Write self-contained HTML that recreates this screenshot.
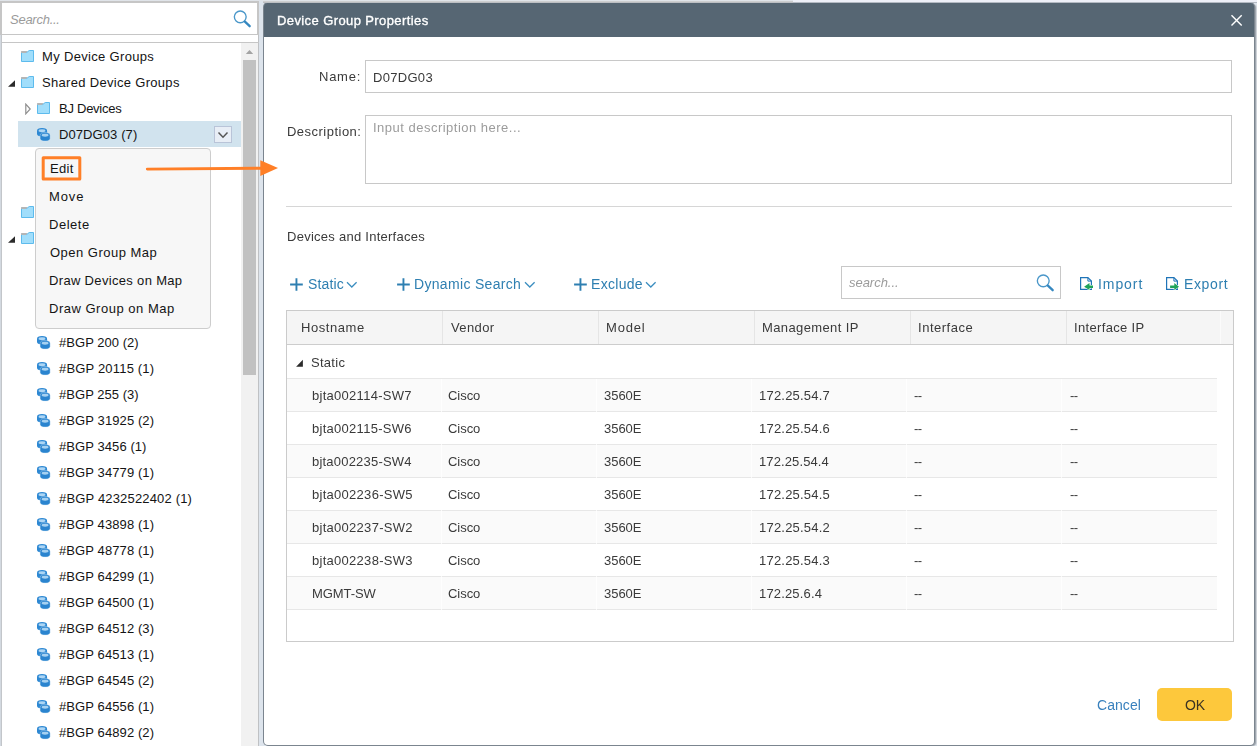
<!DOCTYPE html>
<html lang="en">
<head>
<meta charset="utf-8">
<title>Device Group Properties</title>
<style>
*{box-sizing:border-box;margin:0;padding:0}
html,body{width:1257px;height:746px;overflow:hidden}
body{background:#dde4ec;font-family:"Liberation Sans",sans-serif;font-size:13px;color:#333;position:relative}
.abs,svg{position:absolute}
.t{position:absolute;white-space:nowrap;line-height:16px;height:16px}
.i{font-style:italic;color:#9b9b9b}
.tr{color:#141414}
.n{color:#3a3a3a}
.g{color:#9c9c9c}
.w{color:#fff;-webkit-text-stroke:.35px #fff}
.b{color:#2e7fb1;font-size:14px}
.k{color:#3b3323;font-size:14px}
.cn{color:#3880bd}
#topstrip{left:0;top:0;width:1257px;height:1px;background:#e0e4e9}
#topstrip3{left:263px;top:1px;width:994px;height:2px;background:linear-gradient(#cdcecf 0,#cdcecf 1px,#bcbfc3 1px,#bcbfc3 2px)}
#topstrip2{left:793px;top:0;width:464px;height:3px;background:linear-gradient(#eef0f8 0,#eef0f8 2px,#b4bac3 2px,#b4bac3 3px)}
#left{left:0;top:0;width:259px;height:746px;background:linear-gradient(90deg,#d3d9e0 0,#d3d9e0 1px,#c3c6ca 1px,#c3c6ca 2px,#fff 2px);border-right:1px solid #bfc1c4}
#sbox{left:0;top:1px;width:259px;height:34px;border:solid #c6c6c6;border-width:2px 2px 1px 2px;background:#fff}
#treeline{left:2px;top:42px;width:257px;height:1px;background:#c6c6c6}
#strack{left:241px;top:43px;width:17px;height:703px;background:#f1f1f1}
#sthumb{left:243px;top:60px;width:13px;height:315px;background:#c1c1c1}
#sel{left:18px;top:121px;width:223px;height:26px;background:#d1e3ee}
#menu{left:35px;top:148px;width:176px;height:181px;background:#f7f7f7;border:1px solid #cdcdcd;border-radius:4px}
#dlg{left:264px;top:3px;width:990px;height:742px;background:#fff;border-radius:4px;box-shadow:0 0 0 1px #7b858f,2px 1px 0 0 #a0a7af,3px 1px 0 0 #cdd2d8}
#title{left:264px;top:3px;width:990px;height:34px;background:#566673;border-radius:3px 3px 0 0}
.inp{position:absolute;border:1px solid #c8c8c8;background:#fff}
.hl{position:absolute;height:1px;background:#d6d6d6}
#tbl{left:286px;top:310px;width:948px;height:332px;border:1px solid #cbcbcb;background:#fff}
#thead{left:287px;top:311px;width:946px;height:34px;background:#f5f5f5;border-bottom:1px solid #cdcdcd}
.cs{position:absolute;top:311px;width:1px;height:33px;background:#e5e5e5}
.dr{position:absolute;left:287px;width:930px;height:33px;border-bottom:1px solid #e7e7e7}
.od{background:#fafafa}
#dtext{position:absolute;left:0;top:0;width:1257px;height:746px;will-change:transform}
#ok{left:1157px;top:688px;width:75px;height:33px;background:#fdc83c;border-radius:5px}
</style>
</head>
<body>
<div class="abs" id="left"></div>
<div class="abs" id="sbox"></div>
<svg style="left:232px;top:8px" width="22" height="22" viewBox="0 0 22 22"><circle cx="8.25" cy="8.85" r="5.9" fill="none" stroke="#4a97c9" stroke-width="1.35"/><path d="M12.9 13.6 L17.7 18.2" stroke="#3587c0" stroke-width="2.3" stroke-linecap="round"/></svg>
<div class="abs" id="treeline"></div><div class="abs" id="strack"></div>
<svg style="left:245px;top:49px" width="9" height="6"><path d="M0.8 5 L4.5 1 L8.2 5Z" fill="#a3a3a3"/></svg>
<div class="abs" id="sthumb"></div><div class="abs" id="sel"></div>
<svg style="left:21px;top:50px" width="13" height="12" viewBox="0 0 13 12"><path d="M0.5 2.5 H5.7 L8.2 0.5 H12.5 V11.5 H0.5Z" fill="#a1defb" stroke="#5dbbed" stroke-width="1"/><path d="M0.1 1.1 H6.6 L4.9 2.9 H0.1Z" fill="#b5b5b5"/></svg>
<svg style="left:21px;top:76px" width="13" height="12" viewBox="0 0 13 12"><path d="M0.5 2.5 H5.7 L8.2 0.5 H12.5 V11.5 H0.5Z" fill="#a1defb" stroke="#5dbbed" stroke-width="1"/><path d="M0.1 1.1 H6.6 L4.9 2.9 H0.1Z" fill="#b5b5b5"/></svg>
<svg style="left:8px;top:80px" width="8" height="8"><path d="M0 6.8 H7 V0.2Z" fill="#2b2b2b"/></svg>
<svg style="left:37px;top:102px" width="13" height="12" viewBox="0 0 13 12"><path d="M0.5 2.5 H5.7 L8.2 0.5 H12.5 V11.5 H0.5Z" fill="#a1defb" stroke="#5dbbed" stroke-width="1"/><path d="M0.1 1.1 H6.6 L4.9 2.9 H0.1Z" fill="#b5b5b5"/></svg>
<svg style="left:25px;top:103px" width="7" height="12"><path d="M0.8 1.2 L5.2 6 L0.8 10.8Z" fill="#fff" stroke="#8f8f8f" stroke-width="1.2"/></svg>
<svg style="left:37px;top:127px" width="14" height="15" viewBox="0 0 14 15"><path d="M0 3.9 A5.05 2.8 0 0 1 10.1 3.9 V6.7 A5.05 2.8 0 0 1 0 6.7Z" fill="#2d88d3"/><ellipse cx="5" cy="3.7" rx="3.4" ry="1.45" fill="#aed6f4"/><path d="M3.1 8.4 A5 2.8 0 0 1 13.1 8.4 V11.2 A5 2.8 0 0 1 3.1 11.2Z" fill="#2a84cf" stroke="#d6eaf7" stroke-opacity=".65" stroke-width=".6"/><ellipse cx="8.1" cy="8.2" rx="3.4" ry="1.45" fill="#a6d1f1"/></svg>
<svg style="left:21px;top:206px" width="13" height="12" viewBox="0 0 13 12"><path d="M0.5 2.5 H5.7 L8.2 0.5 H12.5 V11.5 H0.5Z" fill="#a1defb" stroke="#5dbbed" stroke-width="1"/><path d="M0.1 1.1 H6.6 L4.9 2.9 H0.1Z" fill="#b5b5b5"/></svg>
<svg style="left:21px;top:232px" width="13" height="12" viewBox="0 0 13 12"><path d="M0.5 2.5 H5.7 L8.2 0.5 H12.5 V11.5 H0.5Z" fill="#a1defb" stroke="#5dbbed" stroke-width="1"/><path d="M0.1 1.1 H6.6 L4.9 2.9 H0.1Z" fill="#b5b5b5"/></svg>
<svg style="left:8px;top:236px" width="8" height="8"><path d="M0 6.8 H7 V0.2Z" fill="#2b2b2b"/></svg>
<svg style="left:37px;top:335px" width="14" height="15" viewBox="0 0 14 15"><path d="M0 3.9 A5.05 2.8 0 0 1 10.1 3.9 V6.7 A5.05 2.8 0 0 1 0 6.7Z" fill="#2d88d3"/><ellipse cx="5" cy="3.7" rx="3.4" ry="1.45" fill="#aed6f4"/><path d="M3.1 8.4 A5 2.8 0 0 1 13.1 8.4 V11.2 A5 2.8 0 0 1 3.1 11.2Z" fill="#2a84cf" stroke="#d6eaf7" stroke-opacity=".65" stroke-width=".6"/><ellipse cx="8.1" cy="8.2" rx="3.4" ry="1.45" fill="#a6d1f1"/></svg>
<svg style="left:37px;top:361px" width="14" height="15" viewBox="0 0 14 15"><path d="M0 3.9 A5.05 2.8 0 0 1 10.1 3.9 V6.7 A5.05 2.8 0 0 1 0 6.7Z" fill="#2d88d3"/><ellipse cx="5" cy="3.7" rx="3.4" ry="1.45" fill="#aed6f4"/><path d="M3.1 8.4 A5 2.8 0 0 1 13.1 8.4 V11.2 A5 2.8 0 0 1 3.1 11.2Z" fill="#2a84cf" stroke="#d6eaf7" stroke-opacity=".65" stroke-width=".6"/><ellipse cx="8.1" cy="8.2" rx="3.4" ry="1.45" fill="#a6d1f1"/></svg>
<svg style="left:37px;top:387px" width="14" height="15" viewBox="0 0 14 15"><path d="M0 3.9 A5.05 2.8 0 0 1 10.1 3.9 V6.7 A5.05 2.8 0 0 1 0 6.7Z" fill="#2d88d3"/><ellipse cx="5" cy="3.7" rx="3.4" ry="1.45" fill="#aed6f4"/><path d="M3.1 8.4 A5 2.8 0 0 1 13.1 8.4 V11.2 A5 2.8 0 0 1 3.1 11.2Z" fill="#2a84cf" stroke="#d6eaf7" stroke-opacity=".65" stroke-width=".6"/><ellipse cx="8.1" cy="8.2" rx="3.4" ry="1.45" fill="#a6d1f1"/></svg>
<svg style="left:37px;top:413px" width="14" height="15" viewBox="0 0 14 15"><path d="M0 3.9 A5.05 2.8 0 0 1 10.1 3.9 V6.7 A5.05 2.8 0 0 1 0 6.7Z" fill="#2d88d3"/><ellipse cx="5" cy="3.7" rx="3.4" ry="1.45" fill="#aed6f4"/><path d="M3.1 8.4 A5 2.8 0 0 1 13.1 8.4 V11.2 A5 2.8 0 0 1 3.1 11.2Z" fill="#2a84cf" stroke="#d6eaf7" stroke-opacity=".65" stroke-width=".6"/><ellipse cx="8.1" cy="8.2" rx="3.4" ry="1.45" fill="#a6d1f1"/></svg>
<svg style="left:37px;top:439px" width="14" height="15" viewBox="0 0 14 15"><path d="M0 3.9 A5.05 2.8 0 0 1 10.1 3.9 V6.7 A5.05 2.8 0 0 1 0 6.7Z" fill="#2d88d3"/><ellipse cx="5" cy="3.7" rx="3.4" ry="1.45" fill="#aed6f4"/><path d="M3.1 8.4 A5 2.8 0 0 1 13.1 8.4 V11.2 A5 2.8 0 0 1 3.1 11.2Z" fill="#2a84cf" stroke="#d6eaf7" stroke-opacity=".65" stroke-width=".6"/><ellipse cx="8.1" cy="8.2" rx="3.4" ry="1.45" fill="#a6d1f1"/></svg>
<svg style="left:37px;top:465px" width="14" height="15" viewBox="0 0 14 15"><path d="M0 3.9 A5.05 2.8 0 0 1 10.1 3.9 V6.7 A5.05 2.8 0 0 1 0 6.7Z" fill="#2d88d3"/><ellipse cx="5" cy="3.7" rx="3.4" ry="1.45" fill="#aed6f4"/><path d="M3.1 8.4 A5 2.8 0 0 1 13.1 8.4 V11.2 A5 2.8 0 0 1 3.1 11.2Z" fill="#2a84cf" stroke="#d6eaf7" stroke-opacity=".65" stroke-width=".6"/><ellipse cx="8.1" cy="8.2" rx="3.4" ry="1.45" fill="#a6d1f1"/></svg>
<svg style="left:37px;top:491px" width="14" height="15" viewBox="0 0 14 15"><path d="M0 3.9 A5.05 2.8 0 0 1 10.1 3.9 V6.7 A5.05 2.8 0 0 1 0 6.7Z" fill="#2d88d3"/><ellipse cx="5" cy="3.7" rx="3.4" ry="1.45" fill="#aed6f4"/><path d="M3.1 8.4 A5 2.8 0 0 1 13.1 8.4 V11.2 A5 2.8 0 0 1 3.1 11.2Z" fill="#2a84cf" stroke="#d6eaf7" stroke-opacity=".65" stroke-width=".6"/><ellipse cx="8.1" cy="8.2" rx="3.4" ry="1.45" fill="#a6d1f1"/></svg>
<svg style="left:37px;top:517px" width="14" height="15" viewBox="0 0 14 15"><path d="M0 3.9 A5.05 2.8 0 0 1 10.1 3.9 V6.7 A5.05 2.8 0 0 1 0 6.7Z" fill="#2d88d3"/><ellipse cx="5" cy="3.7" rx="3.4" ry="1.45" fill="#aed6f4"/><path d="M3.1 8.4 A5 2.8 0 0 1 13.1 8.4 V11.2 A5 2.8 0 0 1 3.1 11.2Z" fill="#2a84cf" stroke="#d6eaf7" stroke-opacity=".65" stroke-width=".6"/><ellipse cx="8.1" cy="8.2" rx="3.4" ry="1.45" fill="#a6d1f1"/></svg>
<svg style="left:37px;top:543px" width="14" height="15" viewBox="0 0 14 15"><path d="M0 3.9 A5.05 2.8 0 0 1 10.1 3.9 V6.7 A5.05 2.8 0 0 1 0 6.7Z" fill="#2d88d3"/><ellipse cx="5" cy="3.7" rx="3.4" ry="1.45" fill="#aed6f4"/><path d="M3.1 8.4 A5 2.8 0 0 1 13.1 8.4 V11.2 A5 2.8 0 0 1 3.1 11.2Z" fill="#2a84cf" stroke="#d6eaf7" stroke-opacity=".65" stroke-width=".6"/><ellipse cx="8.1" cy="8.2" rx="3.4" ry="1.45" fill="#a6d1f1"/></svg>
<svg style="left:37px;top:569px" width="14" height="15" viewBox="0 0 14 15"><path d="M0 3.9 A5.05 2.8 0 0 1 10.1 3.9 V6.7 A5.05 2.8 0 0 1 0 6.7Z" fill="#2d88d3"/><ellipse cx="5" cy="3.7" rx="3.4" ry="1.45" fill="#aed6f4"/><path d="M3.1 8.4 A5 2.8 0 0 1 13.1 8.4 V11.2 A5 2.8 0 0 1 3.1 11.2Z" fill="#2a84cf" stroke="#d6eaf7" stroke-opacity=".65" stroke-width=".6"/><ellipse cx="8.1" cy="8.2" rx="3.4" ry="1.45" fill="#a6d1f1"/></svg>
<svg style="left:37px;top:595px" width="14" height="15" viewBox="0 0 14 15"><path d="M0 3.9 A5.05 2.8 0 0 1 10.1 3.9 V6.7 A5.05 2.8 0 0 1 0 6.7Z" fill="#2d88d3"/><ellipse cx="5" cy="3.7" rx="3.4" ry="1.45" fill="#aed6f4"/><path d="M3.1 8.4 A5 2.8 0 0 1 13.1 8.4 V11.2 A5 2.8 0 0 1 3.1 11.2Z" fill="#2a84cf" stroke="#d6eaf7" stroke-opacity=".65" stroke-width=".6"/><ellipse cx="8.1" cy="8.2" rx="3.4" ry="1.45" fill="#a6d1f1"/></svg>
<svg style="left:37px;top:621px" width="14" height="15" viewBox="0 0 14 15"><path d="M0 3.9 A5.05 2.8 0 0 1 10.1 3.9 V6.7 A5.05 2.8 0 0 1 0 6.7Z" fill="#2d88d3"/><ellipse cx="5" cy="3.7" rx="3.4" ry="1.45" fill="#aed6f4"/><path d="M3.1 8.4 A5 2.8 0 0 1 13.1 8.4 V11.2 A5 2.8 0 0 1 3.1 11.2Z" fill="#2a84cf" stroke="#d6eaf7" stroke-opacity=".65" stroke-width=".6"/><ellipse cx="8.1" cy="8.2" rx="3.4" ry="1.45" fill="#a6d1f1"/></svg>
<svg style="left:37px;top:647px" width="14" height="15" viewBox="0 0 14 15"><path d="M0 3.9 A5.05 2.8 0 0 1 10.1 3.9 V6.7 A5.05 2.8 0 0 1 0 6.7Z" fill="#2d88d3"/><ellipse cx="5" cy="3.7" rx="3.4" ry="1.45" fill="#aed6f4"/><path d="M3.1 8.4 A5 2.8 0 0 1 13.1 8.4 V11.2 A5 2.8 0 0 1 3.1 11.2Z" fill="#2a84cf" stroke="#d6eaf7" stroke-opacity=".65" stroke-width=".6"/><ellipse cx="8.1" cy="8.2" rx="3.4" ry="1.45" fill="#a6d1f1"/></svg>
<svg style="left:37px;top:673px" width="14" height="15" viewBox="0 0 14 15"><path d="M0 3.9 A5.05 2.8 0 0 1 10.1 3.9 V6.7 A5.05 2.8 0 0 1 0 6.7Z" fill="#2d88d3"/><ellipse cx="5" cy="3.7" rx="3.4" ry="1.45" fill="#aed6f4"/><path d="M3.1 8.4 A5 2.8 0 0 1 13.1 8.4 V11.2 A5 2.8 0 0 1 3.1 11.2Z" fill="#2a84cf" stroke="#d6eaf7" stroke-opacity=".65" stroke-width=".6"/><ellipse cx="8.1" cy="8.2" rx="3.4" ry="1.45" fill="#a6d1f1"/></svg>
<svg style="left:37px;top:699px" width="14" height="15" viewBox="0 0 14 15"><path d="M0 3.9 A5.05 2.8 0 0 1 10.1 3.9 V6.7 A5.05 2.8 0 0 1 0 6.7Z" fill="#2d88d3"/><ellipse cx="5" cy="3.7" rx="3.4" ry="1.45" fill="#aed6f4"/><path d="M3.1 8.4 A5 2.8 0 0 1 13.1 8.4 V11.2 A5 2.8 0 0 1 3.1 11.2Z" fill="#2a84cf" stroke="#d6eaf7" stroke-opacity=".65" stroke-width=".6"/><ellipse cx="8.1" cy="8.2" rx="3.4" ry="1.45" fill="#a6d1f1"/></svg>
<svg style="left:37px;top:725px" width="14" height="15" viewBox="0 0 14 15"><path d="M0 3.9 A5.05 2.8 0 0 1 10.1 3.9 V6.7 A5.05 2.8 0 0 1 0 6.7Z" fill="#2d88d3"/><ellipse cx="5" cy="3.7" rx="3.4" ry="1.45" fill="#aed6f4"/><path d="M3.1 8.4 A5 2.8 0 0 1 13.1 8.4 V11.2 A5 2.8 0 0 1 3.1 11.2Z" fill="#2a84cf" stroke="#d6eaf7" stroke-opacity=".65" stroke-width=".6"/><ellipse cx="8.1" cy="8.2" rx="3.4" ry="1.45" fill="#a6d1f1"/></svg>
<div class="abs" style="left:214px;top:126px;width:18px;height:17px;border:1px solid #b9c4d8;background:#e8eef6"></div>
<svg style="left:217px;top:131px" width="12" height="9"><path d="M1.5 1.5 L6 6.2 L10.5 1.5" fill="none" stroke="#555" stroke-width="1.5"/></svg>
<div class="abs" id="menu"></div><svg style="left:40px;top:155px" width="44" height="28"><rect x="3.2" y="2.7" width="36.6" height="21.3" fill="none" stroke="#ff7f27" stroke-width="3" stroke-linejoin="round"/></svg>
<div class="abs" id="dlg"></div><div class="abs" id="title"></div>
<div class="abs" id="topstrip"></div><div class="abs" id="topstrip3"></div><div class="abs" id="topstrip2"></div>
<svg style="left:1229px;top:13px" width="14" height="14"><path d="M2.5 2.2 L12.7 12.5 M12.7 2.2 L2.5 12.5" stroke="#fff" stroke-width="1.4"/></svg>
<div class="inp" style="left:365px;top:60px;width:867px;height:33px"></div>
<div class="inp" style="left:365px;top:115px;width:867px;height:69px"></div>
<div class="hl" style="left:286px;top:206px;width:946px"></div>
<svg style="left:144px;top:158px" width="138" height="22"><path d="M3.3 11.1 L118 10.2" stroke="#ff7f27" stroke-width="2.9" stroke-linecap="round"/><path d="M116.3 2.2 L134 10.1 L116.3 18Z" fill="#ff7f27"/></svg>
<svg style="left:290px;top:278px" width="14" height="14"><path d="M6.45 0.3 V12.8 M0.1 6.55 H12.8" stroke="#2e7fb1" stroke-width="1.9"/></svg>
<svg style="left:397px;top:278px" width="14" height="14"><path d="M6.45 0.3 V12.8 M0.1 6.55 H12.8" stroke="#2e7fb1" stroke-width="1.9"/></svg>
<svg style="left:574px;top:278px" width="14" height="14"><path d="M6.45 0.3 V12.8 M0.1 6.55 H12.8" stroke="#2e7fb1" stroke-width="1.9"/></svg>
<svg style="left:346px;top:281px" width="12" height="8"><path d="M1 1.2 L5.8 6 L10.6 1.2" fill="none" stroke="#3b8ec0" stroke-width="1.25"/></svg>
<svg style="left:524px;top:281px" width="12" height="8"><path d="M1 1.2 L5.8 6 L10.6 1.2" fill="none" stroke="#3b8ec0" stroke-width="1.25"/></svg>
<svg style="left:645px;top:281px" width="12" height="8"><path d="M1 1.2 L5.8 6 L10.6 1.2" fill="none" stroke="#3b8ec0" stroke-width="1.25"/></svg>
<div class="inp" style="left:841px;top:266px;width:220px;height:33px"></div>
<svg style="left:1035px;top:272px" width="22" height="22" viewBox="0 0 22 22"><circle cx="8.25" cy="8.85" r="5.9" fill="none" stroke="#4a97c9" stroke-width="1.35"/><path d="M12.9 13.6 L17.7 18.2" stroke="#3587c0" stroke-width="2.3" stroke-linecap="round"/></svg>
<svg style="left:1080px;top:277px" width="15" height="14"><path d="M0.6 0.6 H7.9 L11.4 4.1 V12.4 H0.6Z" fill="#fff" stroke="#1f74b8" stroke-width="1.2"/><path d="M7.9 0.8 V4.1 H11.2" fill="none" stroke="#1f74b8" stroke-width="1"/><path d="M4.1 9.7 L9.5 6.1 V8.5 H13 V10.9 H9.5 V13.1Z" fill="#1fa35a" stroke="#fff" stroke-width="1" paint-order="stroke"/></svg>
<svg style="left:1166px;top:277px" width="15" height="14"><path d="M0.6 0.6 H7.9 L11.4 4.1 V12.4 H0.6Z" fill="#fff" stroke="#1f74b8" stroke-width="1.2"/><path d="M7.9 0.8 V4.1 H11.2" fill="none" stroke="#1f74b8" stroke-width="1"/><path d="M13 9.7 L8.3 6.1 V8.5 H4.1 V10.9 H8.3 V13.1Z" fill="#1fa35a" stroke="#fff" stroke-width="1" paint-order="stroke"/></svg>
<div class="abs" id="tbl"></div><div class="abs" id="thead"></div>
<div class="cs" style="left:442px"></div>
<div class="cs" style="left:598px"></div>
<div class="cs" style="left:754px"></div>
<div class="cs" style="left:910px"></div>
<div class="cs" style="left:1066px"></div>
<div class="cs" style="left:1220px;background:#fbfbfb"></div>
<svg style="left:296px;top:359px" width="8" height="8"><path d="M0.1 7.7 H6.9 V0.7Z" fill="#2b2b2b"/></svg>
<div class="hl" style="left:287px;top:378px;width:930px;background:#e7e7e7"></div>
<div class="dr od" style="top:379px"></div>
<div class="dr" style="top:412px"></div>
<div class="dr od" style="top:445px"></div>
<div class="dr" style="top:478px"></div>
<div class="dr od" style="top:511px"></div>
<div class="dr" style="top:544px"></div>
<div class="dr od" style="top:577px"></div>
<div class="abs" style="left:441px;top:379px;width:1px;height:231px;background:rgba(255,255,255,.75)"></div>
<div class="abs" style="left:596px;top:379px;width:1px;height:231px;background:rgba(255,255,255,.75)"></div>
<div class="abs" style="left:751px;top:379px;width:1px;height:231px;background:rgba(255,255,255,.75)"></div>
<div class="abs" style="left:906px;top:379px;width:1px;height:231px;background:rgba(255,255,255,.75)"></div>
<div class="abs" style="left:1061px;top:379px;width:1px;height:231px;background:rgba(255,255,255,.75)"></div>
<div class="abs" id="ok"></div>
<div class="t i" style="left:10px;top:12px;letter-spacing:-0.26px">Search...</div>
<div class="t tr" style="left:42px;top:49px;letter-spacing:0.33px">My Device Groups</div>
<div class="t tr" style="left:42px;top:75px;letter-spacing:0.31px">Shared Device Groups</div>
<div class="t tr" style="left:59px;top:101px;letter-spacing:-0.26px">BJ Devices</div>
<div class="t tr" style="left:59px;top:127px;letter-spacing:0.09px">D07DG03 (7)</div>
<div class="t tr" style="left:59px;top:335px;letter-spacing:0.04px">#BGP 200 (2)</div>
<div class="t tr" style="left:59px;top:361px;letter-spacing:0.18px">#BGP 20115 (1)</div>
<div class="t tr" style="left:59px;top:387px;letter-spacing:0.04px">#BGP 255 (3)</div>
<div class="t tr" style="left:59px;top:413px;letter-spacing:0.1px">#BGP 31925 (2)</div>
<div class="t tr" style="left:59px;top:439px;letter-spacing:0.08px">#BGP 3456 (1)</div>
<div class="t tr" style="left:59px;top:465px;letter-spacing:0.1px">#BGP 34779 (1)</div>
<div class="t tr" style="left:59px;top:491px;letter-spacing:0.17px">#BGP 4232522402 (1)</div>
<div class="t tr" style="left:59px;top:517px;letter-spacing:0.1px">#BGP 43898 (1)</div>
<div class="t tr" style="left:59px;top:543px;letter-spacing:0.1px">#BGP 48778 (1)</div>
<div class="t tr" style="left:59px;top:569px;letter-spacing:0.1px">#BGP 64299 (1)</div>
<div class="t tr" style="left:59px;top:595px;letter-spacing:0.1px">#BGP 64500 (1)</div>
<div class="t tr" style="left:59px;top:621px;letter-spacing:0.1px">#BGP 64512 (3)</div>
<div class="t tr" style="left:59px;top:647px;letter-spacing:0.1px">#BGP 64513 (1)</div>
<div class="t tr" style="left:59px;top:673px;letter-spacing:0.1px">#BGP 64545 (2)</div>
<div class="t tr" style="left:59px;top:699px;letter-spacing:0.1px">#BGP 64556 (1)</div>
<div class="t tr" style="left:59px;top:725px;letter-spacing:0.1px">#BGP 64892 (2)</div>
<div class="t tr" style="left:50px;top:161px;letter-spacing:0.3px">Edit</div>
<div class="t tr" style="left:49px;top:189px;letter-spacing:0.9px">Move</div>
<div class="t tr" style="left:49px;top:217px;letter-spacing:0.52px">Delete</div>
<div class="t tr" style="left:50px;top:245px;letter-spacing:0.49px">Open Group Map</div>
<div class="t tr" style="left:49px;top:273px;letter-spacing:0.33px">Draw Devices on Map</div>
<div class="t tr" style="left:49px;top:301px;letter-spacing:0.51px">Draw Group on Map</div>
<div id="dtext">
<div class="t w" style="left:277px;top:13px;letter-spacing:0.4px">Device Group Properties</div>
<div class="t n" style="left:319px;top:69px;letter-spacing:0.75px">Name:</div>
<div class="t n" style="left:373px;top:70px;letter-spacing:0.3px">D07DG03</div>
<div class="t n" style="left:287px;top:124px;letter-spacing:0.48px">Description:</div>
<div class="t g" style="left:373px;top:120px;letter-spacing:0.49px">Input description here...</div>
<div class="t n" style="left:287px;top:229px;letter-spacing:0.26px">Devices and Interfaces</div>
<div class="t b" style="left:308px;top:276px;letter-spacing:0.16px">Static</div>
<div class="t b" style="left:414px;top:276px;letter-spacing:0.32px">Dynamic Search</div>
<div class="t b" style="left:591px;top:276px;letter-spacing:0.3px">Exclude</div>
<div class="t b" style="left:1098px;top:276px;letter-spacing:0.92px">Import</div>
<div class="t b" style="left:1184px;top:276px;letter-spacing:0.64px">Export</div>
<div class="t n" style="left:301px;top:320px;letter-spacing:0.57px">Hostname</div>
<div class="t n" style="left:451px;top:320px;letter-spacing:0.38px">Vendor</div>
<div class="t n" style="left:606px;top:320px;letter-spacing:0.83px">Model</div>
<div class="t n" style="left:762px;top:320px;letter-spacing:0.38px">Management IP</div>
<div class="t n" style="left:918px;top:320px;letter-spacing:0.52px">Interface</div>
<div class="t n" style="left:1074px;top:320px;letter-spacing:0.34px">Interface IP</div>
<div class="t n" style="left:311px;top:355px;letter-spacing:0.28px">Static</div>
<div class="t n" style="left:312px;top:388px;letter-spacing:0.28px">bjta002114-SW7</div>
<div class="t n" style="left:448px;top:388px;letter-spacing:-0.05px">Cisco</div>
<div class="t n" style="left:604px;top:388px;letter-spacing:-0.03px">3560E</div>
<div class="t n" style="left:759px;top:388px;letter-spacing:0.21px">172.25.54.7</div>
<div class="t n" style="left:914px;top:388px;letter-spacing:-0.5px">--</div>
<div class="t n" style="left:1070px;top:388px;letter-spacing:-0.5px">--</div>
<div class="t n" style="left:312px;top:421px;letter-spacing:0.28px">bjta002115-SW6</div>
<div class="t n" style="left:448px;top:421px;letter-spacing:-0.05px">Cisco</div>
<div class="t n" style="left:604px;top:421px;letter-spacing:-0.03px">3560E</div>
<div class="t n" style="left:759px;top:421px;letter-spacing:0.21px">172.25.54.6</div>
<div class="t n" style="left:914px;top:421px;letter-spacing:-0.5px">--</div>
<div class="t n" style="left:1070px;top:421px;letter-spacing:-0.5px">--</div>
<div class="t n" style="left:312px;top:454px;letter-spacing:0.21px">bjta002235-SW4</div>
<div class="t n" style="left:448px;top:454px;letter-spacing:-0.05px">Cisco</div>
<div class="t n" style="left:604px;top:454px;letter-spacing:-0.03px">3560E</div>
<div class="t n" style="left:759px;top:454px;letter-spacing:0.11px">172.25.54.4</div>
<div class="t n" style="left:914px;top:454px;letter-spacing:-0.5px">--</div>
<div class="t n" style="left:1070px;top:454px;letter-spacing:-0.5px">--</div>
<div class="t n" style="left:312px;top:487px;letter-spacing:0.28px">bjta002236-SW5</div>
<div class="t n" style="left:448px;top:487px;letter-spacing:-0.05px">Cisco</div>
<div class="t n" style="left:604px;top:487px;letter-spacing:-0.03px">3560E</div>
<div class="t n" style="left:759px;top:487px;letter-spacing:0.21px">172.25.54.5</div>
<div class="t n" style="left:914px;top:487px;letter-spacing:-0.5px">--</div>
<div class="t n" style="left:1070px;top:487px;letter-spacing:-0.5px">--</div>
<div class="t n" style="left:312px;top:520px;letter-spacing:0.28px">bjta002237-SW2</div>
<div class="t n" style="left:448px;top:520px;letter-spacing:-0.05px">Cisco</div>
<div class="t n" style="left:604px;top:520px;letter-spacing:-0.03px">3560E</div>
<div class="t n" style="left:759px;top:520px;letter-spacing:0.21px">172.25.54.2</div>
<div class="t n" style="left:914px;top:520px;letter-spacing:-0.5px">--</div>
<div class="t n" style="left:1070px;top:520px;letter-spacing:-0.5px">--</div>
<div class="t n" style="left:312px;top:553px;letter-spacing:0.28px">bjta002238-SW3</div>
<div class="t n" style="left:448px;top:553px;letter-spacing:-0.05px">Cisco</div>
<div class="t n" style="left:604px;top:553px;letter-spacing:-0.03px">3560E</div>
<div class="t n" style="left:759px;top:553px;letter-spacing:0.21px">172.25.54.3</div>
<div class="t n" style="left:914px;top:553px;letter-spacing:-0.5px">--</div>
<div class="t n" style="left:1070px;top:553px;letter-spacing:-0.5px">--</div>
<div class="t n" style="left:312px;top:586px;letter-spacing:-0.08px">MGMT-SW</div>
<div class="t n" style="left:448px;top:586px;letter-spacing:-0.05px">Cisco</div>
<div class="t n" style="left:604px;top:586px;letter-spacing:-0.03px">3560E</div>
<div class="t n" style="left:759px;top:586px;letter-spacing:0.16px">172.25.6.4</div>
<div class="t n" style="left:914px;top:586px;letter-spacing:-0.5px">--</div>
<div class="t n" style="left:1070px;top:586px;letter-spacing:-0.5px">--</div>
<div class="t b cn" style="left:1097px;top:697px;letter-spacing:0.06px">Cancel</div>
<div class="t k" style="left:1185px;top:697px;letter-spacing:-0.2px">OK</div>
<div class="t i" style="left:849px;top:275px;letter-spacing:-0.03px">search...</div>
</div>
</body>
</html>
